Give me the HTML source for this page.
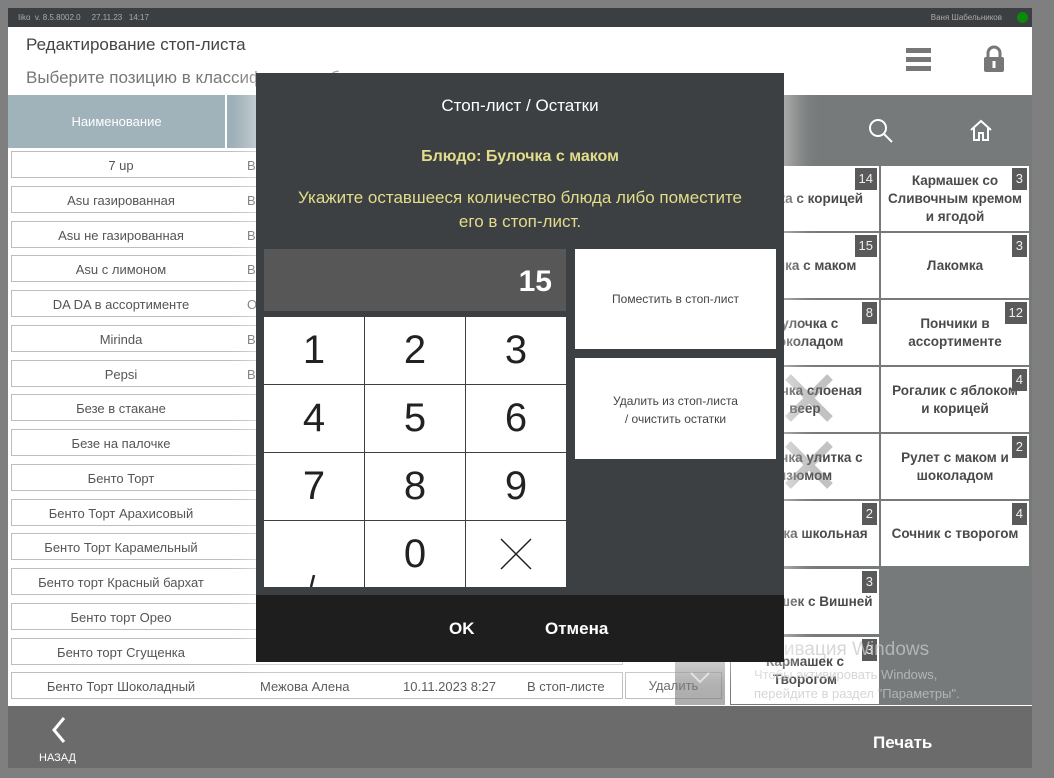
<!DOCTYPE html>
<html><head><meta charset="utf-8"><style>
*{box-sizing:border-box;margin:0;padding:0}
body{width:1054px;height:778px;background:#7f7f7f;font-family:"Liberation Sans","DejaVu Sans",sans-serif;position:relative;overflow:hidden}
.a{position:absolute}
.row{position:absolute;left:11px;width:612px;height:27px;background:#fff;border:1px solid #bdbdbd;font-size:13px;color:#555}
.row span{position:absolute;top:6px}
.row .n{left:0;width:218px;text-align:center}
.row .v{left:235px}
.tile{position:absolute;width:148px;height:65px;background:#fff;color:#4a4a4a;font-size:13.5px;font-weight:bold;display:flex;align-items:center;justify-content:center;text-align:center;line-height:18px;padding:0 6px}
.badge{position:absolute;top:2px;right:2px;background:#5a5a5a;color:#eee;font-size:13px;font-weight:normal;padding:2px 4px;line-height:18px}
.key{position:absolute;width:100px;height:67px;background:#fff;font-size:40px;color:#222;display:flex;align-items:center;justify-content:center}
</style></head><body>
<div class="a" style="left:8px;top:8px;width:1024px;height:760px;background:#fff"></div>
<div class="a" style="left:8px;top:8px;width:1024px;height:19px;background:#3c3f41;color:#aaa;font-size:8px;line-height:19px;padding-left:10px">Iiko&nbsp; v. 8.5.8002.0 &nbsp;&nbsp;&nbsp; 27.11.23 &nbsp; 14:17
<span style="position:absolute;right:30px">Ваня Шабельников</span><span style="position:absolute;right:4px;top:4px;width:11px;height:11px;border-radius:50%;background:#0a8a0a"></span></div>
<div class="a" style="left:26px;top:35px;font-size:17px;color:#444">Редактирование стоп-листа</div>
<div class="a" style="left:26px;top:68px;font-size:17px;color:#777">Выберите позицию в классификаторе блюд</div>
<div class="a" style="left:906px;top:48px;width:25px;height:5px;background:#777;box-shadow:0 9px 0 #777,0 18px 0 #777"></div>
<svg class="a" style="left:982px;top:45px" width="24" height="28" viewBox="0 0 24 28"><path d="M6 12V8a6 6 0 0 1 12 0v4" fill="none" stroke="#777" stroke-width="3"/><rect x="2" y="12" width="20" height="15" rx="2" fill="#777"/><rect x="10.5" y="16" width="3" height="7" fill="#fff"/></svg>
<div class="a" style="left:8px;top:95px;width:722px;height:610px;background:#fff"></div>
<div class="a" style="left:8px;top:95px;width:217px;height:53px;background:#a0b3bb;color:#fff;font-size:13px;text-align:center;line-height:53px">Наименование</div>
<div class="a" style="left:227px;top:95px;width:503px;height:53px;background:#9aadb5"></div>
<div class="row" style="top:151px"><span class="n">7 up</span><span class="v">Ва</span></div>
<div class="row" style="top:186px"><span class="n">Asu газированная</span><span class="v">Ва</span></div>
<div class="row" style="top:221px"><span class="n">Asu не газированная</span><span class="v">Ва</span></div>
<div class="row" style="top:255px"><span class="n">Asu с лимоном</span><span class="v">Ва</span></div>
<div class="row" style="top:290px"><span class="n">DA DA в ассортименте</span><span class="v">Ог</span></div>
<div class="row" style="top:325px"><span class="n">Mirinda</span><span class="v">Ва</span></div>
<div class="row" style="top:360px"><span class="n">Pepsi</span><span class="v">Ва</span></div>
<div class="row" style="top:394px"><span class="n">Безе в стакане</span></div>
<div class="row" style="top:429px"><span class="n">Безе на палочке</span></div>
<div class="row" style="top:464px"><span class="n">Бенто Торт</span></div>
<div class="row" style="top:499px"><span class="n">Бенто Торт Арахисовый</span></div>
<div class="row" style="top:533px"><span class="n">Бенто Торт Карамельный</span></div>
<div class="row" style="top:568px"><span class="n">Бенто торт Красный бархат</span></div>
<div class="row" style="top:603px"><span class="n">Бенто торт Орео</span></div>
<div class="row" style="top:638px"><span class="n">Бенто торт Сгущенка</span></div>
<div class="row" style="top:672px;width:612px"><span class="n">Бенто Торт Шоколадный</span><span style="left:248px">Межова Алена</span><span style="left:391px">10.11.2023 8:27</span><span style="left:515px">В стоп-листе</span></div>
<div class="a" style="left:625px;top:672px;width:97px;height:27px;border:1px solid #bdbdbd;background:#fff;font-size:13px;color:#666;text-align:center;line-height:26px">Удалить</div>
<div class="a" style="left:675px;top:660px;width:50px;height:45px;background:rgba(120,120,120,.6)"></div>
<svg class="a" style="left:690px;top:672px" width="20" height="12"><path d="M1 1l9 9 9-9" fill="none" stroke="#ddd" stroke-width="2"/></svg>
<div class="a" style="left:730px;top:95px;width:302px;height:610px;background:#777a7a"></div>
<svg class="a" style="left:868px;top:118px" width="26" height="26"><circle cx="10" cy="10" r="8" fill="none" stroke="#fff" stroke-width="2"/><path d="M16 16l8 8" stroke="#fff" stroke-width="2"/></svg>
<svg class="a" style="left:969px;top:118px" width="24" height="24"><path d="M2 12L12 3l10 9M5 10v12h5v-7h4v7h5V10" fill="none" stroke="#fff" stroke-width="2"/></svg>
<div class="tile" style="left:731px;top:166px">улочка с корицей<span class="badge">14</span></div>
<div class="tile" style="left:881px;top:166px">Кармашек со Сливочным кремом и ягодой<span class="badge">3</span></div>
<div class="tile" style="left:731px;top:233px">улочка с маком<span class="badge">15</span></div>
<div class="tile" style="left:881px;top:233px">Лакомка<span class="badge">3</span></div>
<div class="tile" style="left:731px;top:300px">Булочка с шоколадом<span class="badge">8</span></div>
<div class="tile" style="left:881px;top:300px">Пончики в ассортименте<span class="badge">12</span></div>
<div class="tile" style="left:731px;top:367px">Булочка слоеная веер</div>
<div class="tile" style="left:881px;top:367px">Рогалик с яблоком и корицей<span class="badge">4</span></div>
<div class="tile" style="left:731px;top:434px">Булочка улитка с изюмом</div>
<div class="tile" style="left:881px;top:434px">Рулет с маком и шоколадом<span class="badge">2</span></div>
<div class="tile" style="left:731px;top:501px">Булочка школьная<span class="badge">2</span></div>
<div class="tile" style="left:881px;top:501px">Сочник с творогом<span class="badge">4</span></div>
<div class="tile" style="left:731px;top:569px">Кармашек с Вишней<span class="badge">3</span></div>
<div class="tile" style="left:731px;top:637px;height:67px">Кармашек с Творогом<span class="badge">3</span></div>
<svg class="a" style="left:785px;top:372px" width="50" height="120"><path d="M3 5l42 42M45 5L3 47M3 72l42 42M45 72L3 114" stroke="rgba(120,120,120,.45)" stroke-width="8"/></svg>
<div class="a" style="left:754px;top:639px;font-size:19px;color:rgba(200,200,200,.75)">Активация Windows</div>
<div class="a" style="left:754px;top:665px;font-size:13px;color:rgba(200,200,200,.75);line-height:19px">Чтобы активировать Windows,<br>перейдите в раздел "Параметры".</div>
<div class="a" style="left:8px;top:706px;width:1024px;height:62px;background:#6b6b6b"></div>
<svg class="a" style="left:50px;top:716px" width="18" height="28"><path d="M14 2L4 14l10 12" fill="none" stroke="#fff" stroke-width="3"/></svg>
<div class="a" style="left:39px;top:752px;font-size:11px;color:#fff">НАЗАД</div>
<div class="a" style="left:873px;top:733px;font-size:17px;font-weight:bold;color:#fff">Печать</div>
<div class="a" style="left:256px;top:73px;width:528px;height:589px;background:#3c4042;box-shadow:0 0 24px 8px rgba(255,255,255,.5)">
<div class="a" style="left:0;top:23px;width:528px;text-align:center;color:#fff;font-size:17px">Стоп-лист / Остатки</div>
<div class="a" style="left:0;top:75px;width:528px;text-align:center;color:#e3dc8a;font-size:16px;font-weight:bold">Блюдо: Булочка с маком</div>
<div class="a" style="left:0;top:113px;width:528px;text-align:center;color:#e3dc8a;font-size:17px;line-height:24px">Укажите оставшееся количество блюда либо поместите<br>его в стоп-лист.</div>
<div class="a" style="left:8px;top:176px;width:302px;height:62px;background:#575757;color:#fff;font-size:30px;font-weight:bold;text-align:right;padding-right:14px;line-height:66px">15</div>
<div class="a" style="left:8px;top:244px;width:302px;height:270px;background:#3c4042"></div>
<div class="key" style="left:8px;top:244px">1</div><div class="key" style="left:109px;top:244px">2</div><div class="key" style="left:210px;top:244px">3</div>
<div class="key" style="left:8px;top:312px">4</div><div class="key" style="left:109px;top:312px">5</div><div class="key" style="left:210px;top:312px">6</div>
<div class="key" style="left:8px;top:380px">7</div><div class="key" style="left:109px;top:380px">8</div><div class="key" style="left:210px;top:380px">9</div>
<div class="key" style="left:8px;top:448px;height:66px;overflow:hidden"><svg class="a" style="left:44px;top:54px" width="10" height="12"><path d="M6 0L3 12" stroke="#222" stroke-width="2.5"/></svg></div><div class="key" style="left:109px;top:448px;height:66px">0</div>
<div class="key" style="left:210px;top:448px;height:66px"><svg width="32" height="32"><path d="M1 1l30 30M31 1L1 31" stroke="#222" stroke-width="1.5"/></svg></div>
<div class="a" style="left:319px;top:176px;width:201px;height:100px;background:#fff;font-size:12px;color:#444;text-align:center;line-height:100px">Поместить в стоп-лист</div>
<div class="a" style="left:319px;top:285px;width:201px;height:101px;background:#fff;font-size:12px;color:#444;text-align:center;padding-top:34px;line-height:18px">Удалить из стоп-листа<br>/ очистить остатки</div>
<div class="a" style="left:0;top:522px;width:528px;height:67px;background:#1e1e1e;color:#fff;font-size:17px;font-weight:bold">
<span class="a" style="left:193px;top:24px">OK</span><span class="a" style="left:289px;top:24px">Отмена</span></div>
</div>
</body></html>
